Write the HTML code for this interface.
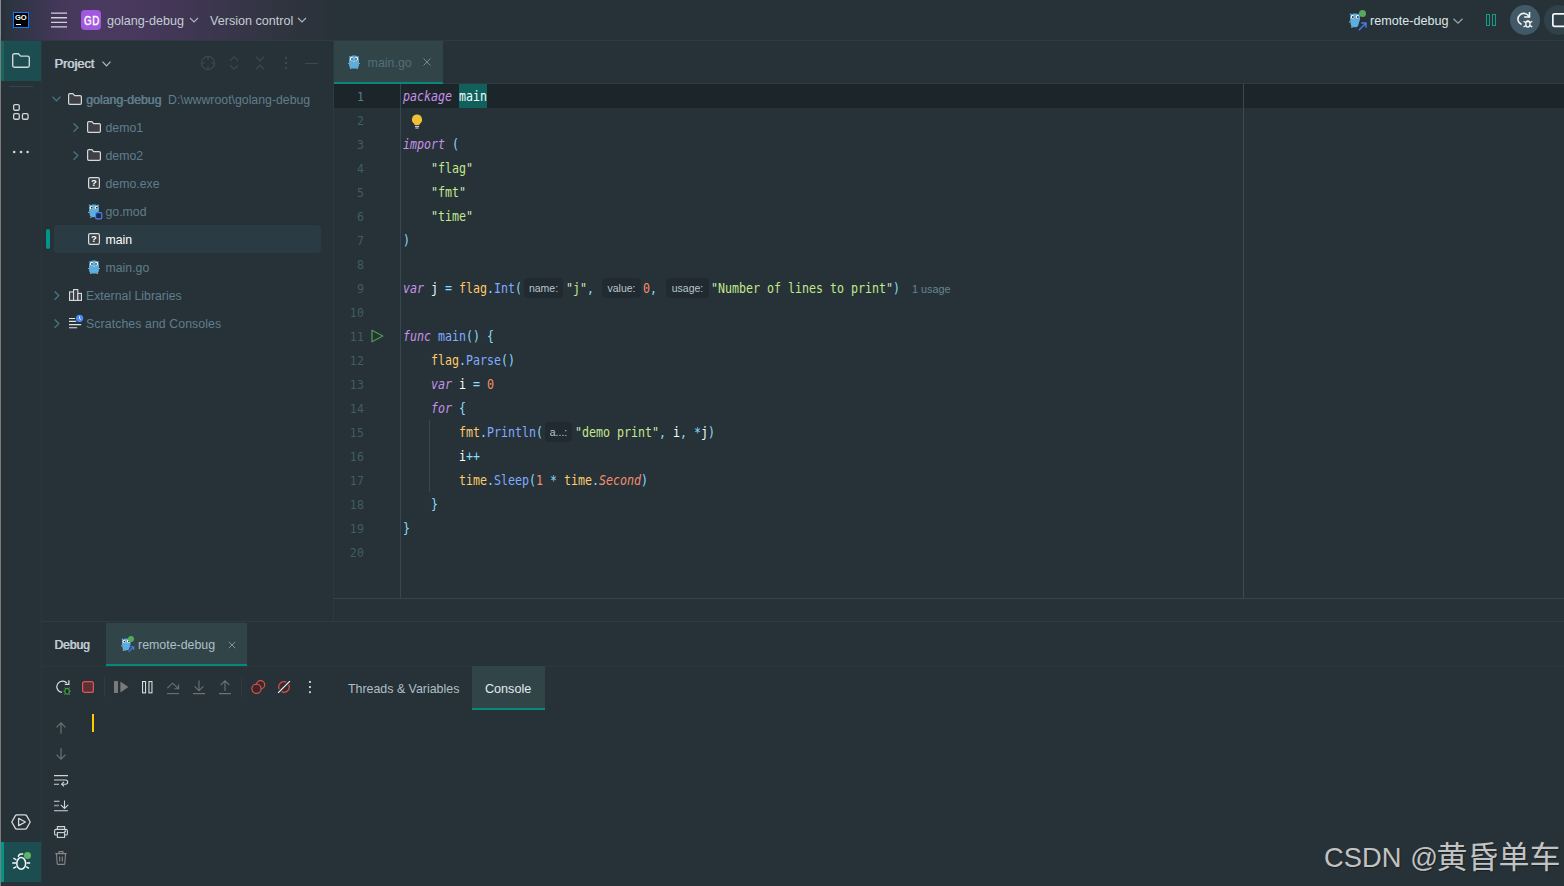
<!DOCTYPE html>
<html lang="en">
<head>
<meta charset="utf-8">
<title>golang-debug – main.go</title>
<style>
html,body{margin:0;padding:0;}
body{width:1564px;height:886px;overflow:hidden;background:#263238;position:relative;
  font-family:"Liberation Sans","Noto Sans CJK SC",sans-serif;font-size:12.4px;color:#b0bec5;}
.abs{position:absolute;}
.t{position:absolute;white-space:pre;line-height:16px;height:16px;}
svg{position:absolute;overflow:visible;}
/* title bar */
#titlebar{left:0;top:0;width:1564px;height:40px;
  background:linear-gradient(90deg,#27313a 0,#2c3440 10px,#34354b 28px,#44385a 60px,#4b3a60 100px,#46385b 150px,#3c364f 210px,#30343f 280px,#283239 340px,#263238 400px);}
#titleline{left:0;top:40px;width:1564px;height:1px;background:#2c3a43;}
#leftedge{left:0;top:0;width:1px;height:886px;background:linear-gradient(#8a8a8a 0,#8a8a8a 34px,#807b7b 42px,#807b7b 100%);}
/* stripe */
.stripeActive{background:#1c4d50;}
.stripeBar{background:#17665f;}
.vline{width:1px;background:#2a373e;}
.hline{height:1px;background:#2a373e;}
/* tree */
.tree{color:#607d8b;font-size:12.3px;}
.fb{text-shadow:0.55px 0 0 currentColor;}
.fb2{text-shadow:0.7px 0 0 currentColor;}
/* code */
.ln{position:absolute;width:40px;text-align:right;left:324.5px;letter-spacing:0.5px;font:11.5px "DejaVu Sans Mono","Liberation Mono",monospace;
  color:#435c66;line-height:24px;height:24px;white-space:pre;}
.cl{position:absolute;left:403px;margin-top:-0.7px;font:14px "DejaVu Sans Mono","Liberation Mono",monospace;white-space:pre;
  transform:scaleX(0.8305);transform-origin:0 50%;line-height:24px;height:24px;color:#eeffff;}
.k{color:#c792ea;font-style:italic;}
.s{color:#c3e88d;}
.q{color:#d4e6c0;}
.p{color:#89ddff;}
.y{color:#ffcb6b;}
.f{color:#82aaff;}
.n{color:#f78c6c;}
.ni{color:#f78c6c;font-style:italic;}
.hint{position:absolute;height:20px;border-radius:4px;background:#202a30;color:#b8c6ce;font-size:10.5px;line-height:20px;text-align:center;white-space:pre;}
</style>
</head>
<body>
<!-- ===== title bar ===== -->
<div class="abs" id="titlebar"></div>
<div class="abs" id="titleline"></div>

<!-- ===== left stripe ===== -->
<div class="abs stripeActive" style="left:1px;top:41px;width:40px;height:40px;"></div>
<div class="abs stripeBar" style="left:1px;top:41px;width:3px;height:40px;"></div>
<div class="abs hline" style="left:9px;top:86px;width:24px;background:#33444c;"></div>
<div class="abs stripeActive" style="left:1px;top:842px;width:40px;height:40px;"></div>
<div class="abs" style="left:1px;top:842px;width:3px;height:40px;background:#009688;"></div>
<div class="abs vline" style="left:41px;top:41px;height:845px;"></div>

<!-- ===== project panel ===== -->
<div class="abs vline" style="left:333px;top:41px;height:580px;background:#2b3942;"></div>
<div class="abs" style="left:54px;top:225px;width:267px;height:28px;border-radius:4px;background:#2b3b43;"></div>
<div class="abs" style="left:46px;top:229px;width:4px;height:20px;border-radius:2px;background:#009688;"></div>

<!-- ===== editor ===== -->
<div class="abs" style="left:334px;top:41px;width:109px;height:43px;background:#314549;"></div>
<div class="abs" style="left:334px;top:82px;width:109px;height:2px;background:#08897c;"></div>
<div class="abs hline" style="left:443px;top:83px;width:1121px;background:#2d3b42;"></div>
<div class="abs" style="left:334px;top:84px;width:1230px;height:24px;background:#1c252a;"></div>
<div class="abs" style="left:459px;top:84px;width:28px;height:24px;background:#12605c;"></div>
<div class="abs vline" style="left:400px;top:84px;height:514px;background:#37474f;"></div>
<div class="abs vline" style="left:1243px;top:84px;height:514px;background:#394a53;"></div>
<div class="abs vline" style="left:429px;top:420px;height:72px;background:#37474f;"></div>
<div class="abs hline" style="left:334px;top:598px;width:1230px;background:#344650;"></div>

<!-- ===== debug panel ===== -->
<div class="abs hline" style="left:42px;top:621px;width:1522px;background:#2d3b43;"></div>
<div class="abs" style="left:106px;top:623px;width:141px;height:43px;background:#314549;"></div>
<div class="abs" style="left:106px;top:664px;width:141px;height:2px;background:#08897c;"></div>
<div class="abs hline" style="left:42px;top:666px;width:1522px;background:#2a373e;"></div>
<div class="abs" style="left:472px;top:666px;width:73px;height:44px;background:#314549;"></div>
<div class="abs" style="left:472px;top:708px;width:73px;height:2px;background:#08897c;"></div>
<div class="abs vline" style="left:104px;top:677px;height:20px;background:#2c3b45;"></div>
<div class="abs vline" style="left:241px;top:677px;height:20px;background:#2c3b45;"></div>
<div class="abs" style="left:92px;top:714px;width:2px;height:18px;background:#ffcc00;"></div>

<div class="abs" id="leftedge"></div>

<!-- ===== TEXT ===== -->
<div class="t" style="left:107px;top:13px;font-size:12.6px;color:#c3cdd3;">golang-debug</div>
<div class="t" style="left:210px;top:13px;font-size:12.6px;color:#c3cdd3;">Version control</div>
<div class="t" style="left:1370px;top:13px;font-size:12.6px;color:#dfe6ea;">remote-debug</div>

<div class="t fb2" style="left:54.3px;top:56px;font-size:12.8px;color:#c3cdd3;">Project</div>

<div class="t tree fb" style="left:86px;top:92px;">golang-debug</div>
<div class="t tree" style="left:168px;top:92px;">D:\wwwroot\golang-debug</div>
<div class="t tree" style="left:105.5px;top:120px;">demo1</div>
<div class="t tree" style="left:105.5px;top:148px;">demo2</div>
<div class="t tree" style="left:105.5px;top:176px;">demo.exe</div>
<div class="t tree" style="left:105.5px;top:204px;">go.mod</div>
<div class="t tree" style="left:105.5px;top:232px;color:#ffffff;">main</div>
<div class="t tree" style="left:105.5px;top:260px;">main.go</div>
<div class="t tree" style="left:86px;top:288px;">External Libraries</div>
<div class="t tree" style="left:86px;top:316px;letter-spacing:0.09px;">Scratches and Consoles</div>

<div class="t" style="left:367.6px;top:55px;color:#546e7a;">main.go</div>

<div class="t fb2" style="left:54.2px;top:637px;color:#c3cdd3;font-size:12px;">Debug</div>
<div class="t" style="left:138px;top:637px;color:#b0bec5;">remote-debug</div>
<div class="t" style="left:348px;top:681px;color:#b0bec5;">Threads &amp; Variables</div>
<div class="t" style="left:485px;top:681px;color:#e4eaed;font-size:12.6px;">Console</div>

<div class="t" style="left:1324px;top:837.5px;font-size:27.3px;word-spacing:1.2px;line-height:40px;height:40px;color:#c2c2c2;text-shadow:1px 1px 1px rgba(0,0,0,.35);">CSDN @</div>
<div class="t" style="left:1436.5px;top:835.3px;font-size:31px;line-height:40px;height:40px;color:#c2c2c2;text-shadow:1px 1px 1px rgba(0,0,0,.35);font-family:'Noto Sans CJK SC','Liberation Sans',sans-serif;">黄昏单车</div>

<!-- ===== line numbers ===== -->
<div class="ln" style="top:85px;color:#5a7f8a;">1</div>
<div class="ln" style="top:109px;">2</div>
<div class="ln" style="top:133px;">3</div>
<div class="ln" style="top:157px;">4</div>
<div class="ln" style="top:181px;">5</div>
<div class="ln" style="top:205px;">6</div>
<div class="ln" style="top:229px;">7</div>
<div class="ln" style="top:253px;">8</div>
<div class="ln" style="top:277px;">9</div>
<div class="ln" style="top:301px;">10</div>
<div class="ln" style="top:325px;">11</div>
<div class="ln" style="top:349px;">12</div>
<div class="ln" style="top:373px;">13</div>
<div class="ln" style="top:397px;">14</div>
<div class="ln" style="top:421px;">15</div>
<div class="ln" style="top:445px;">16</div>
<div class="ln" style="top:469px;">17</div>
<div class="ln" style="top:493px;">18</div>
<div class="ln" style="top:517px;">19</div>
<div class="ln" style="top:541px;">20</div>
<!-- ===== code ===== -->
<div class="cl" style="top:85px;"><span class="k">package</span> main</div>
<div class="cl" style="top:133px;"><span class="k">import</span> <span class="p">(</span></div>
<div class="cl" style="top:157px;">    <span class="q">"</span><span class="s">flag</span><span class="q">"</span></div>
<div class="cl" style="top:181px;">    <span class="q">"</span><span class="s">fmt</span><span class="q">"</span></div>
<div class="cl" style="top:205px;">    <span class="q">"</span><span class="s">time</span><span class="q">"</span></div>
<div class="cl" style="top:229px;"><span class="p">)</span></div>
<div class="cl" style="top:277px;"><span class="k">var</span> j <span class="p">=</span> <span class="y">flag</span><span class="p">.</span><span class="f">Int</span><span class="p">(</span></div>
<div class="cl" style="top:277px;left:566px;"><span class="q">"</span><span class="s">j</span><span class="q">"</span><span class="p">,</span></div>
<div class="cl" style="top:277px;left:643px;"><span class="n">0</span><span class="p">,</span></div>
<div class="cl" style="top:277px;left:711px;"><span class="q">"</span><span class="s">Number of lines to print</span><span class="q">"</span><span class="p">)</span></div>
<div class="cl" style="top:325px;"><span class="k">func</span> <span class="f">main</span><span class="p">()</span> <span class="p">{</span></div>
<div class="cl" style="top:349px;">    <span class="y">flag</span><span class="p">.</span><span class="f">Parse</span><span class="p">()</span></div>
<div class="cl" style="top:373px;">    <span class="k">var</span> i <span class="p">=</span> <span class="n">0</span></div>
<div class="cl" style="top:397px;">    <span class="k">for</span> <span class="p">{</span></div>
<div class="cl" style="top:421px;">        <span class="y">fmt</span><span class="p">.</span><span class="f">Println</span><span class="p">(</span></div>
<div class="cl" style="top:421px;left:575px;"><span class="q">"</span><span class="s">demo print</span><span class="q">"</span><span class="p">,</span> i<span class="p">,</span> <span class="p">*</span>j<span class="p">)</span></div>
<div class="cl" style="top:445px;">        i<span class="p">++</span></div>
<div class="cl" style="top:469px;">        <span class="y">time</span><span class="p">.</span><span class="f">Sleep</span><span class="p">(</span><span class="n">1</span> <span class="p">*</span> <span class="y">time</span><span class="p">.</span><span class="ni">Second</span><span class="p">)</span></div>
<div class="cl" style="top:493px;">    <span class="p">}</span></div>
<div class="cl" style="top:517px;"><span class="p">}</span></div>

<div class="hint" style="left:524px;top:278px;width:39px;">name:</div>
<div class="hint" style="left:602px;top:278px;width:39px;">value:</div>
<div class="hint" style="left:666px;top:278px;width:43px;">usage:</div>
<div class="hint" style="left:545px;top:422px;width:27px;">a...:</div>
<div class="t" style="left:912px;top:281px;font-size:10.8px;color:#668592;">1 usage</div>

<!-- ===== ICONS ===== -->
<!-- GO logo -->
<div class="abs" style="left:13px;top:12px;width:16px;height:16px;background:#000;box-shadow:inset 0 0 0 1px #087cfa;"></div>
<div class="t" style="left:15px;top:12.5px;font:bold 7.6px 'Liberation Sans',sans-serif;line-height:9px;height:9px;color:#fff;letter-spacing:-0.2px;">GO</div>
<div class="abs" style="left:16px;top:24px;width:5px;height:1px;background:#fff;"></div>
<!-- hamburger -->
<svg style="left:51px;top:12px;" width="16" height="16" viewBox="0 0 16 16"><path d="M0 1.2H16M0 5.75H16M0 10.3H16M0 14.9H16" stroke="#cfd0d6" stroke-width="1.3" fill="none"/></svg>
<!-- GD badge -->
<div class="abs" style="left:81px;top:10px;width:20px;height:20px;border-radius:4px;background:#a259e0;"></div>
<div class="t" style="left:83.6px;top:12.5px;width:20px;font:13.2px 'Liberation Sans',sans-serif;line-height:16px;color:#fff;transform:scaleX(0.74);transform-origin:0 50%;letter-spacing:0.9px;-webkit-text-stroke:0.45px #fff;">GD</div>
<!-- chevrons title -->
<svg style="left:189px;top:17px;" width="10" height="6" viewBox="0 0 10 6"><path d="M1 1L5 5L9 1" stroke="#a9b3ba" stroke-width="1.2" fill="none"/></svg>
<svg style="left:297px;top:17px;" width="10" height="6" viewBox="0 0 10 6"><path d="M1 1L5 5L9 1" stroke="#a9b3ba" stroke-width="1.2" fill="none"/></svg>
<svg style="left:1453px;top:18px;" width="10" height="6" viewBox="0 0 10 6"><path d="M0.5 0.8L5 5.2L9.5 0.8" stroke="#9aa5ab" stroke-width="1.2" fill="none"/></svg>
<!-- title right: pause, circle buttons -->
<svg style="left:1486px;top:14px;" width="10" height="12" viewBox="0 0 10 12"><rect x="0.5" y="0.5" width="3" height="11" stroke="#0e9e8a" fill="none"/><rect x="6.5" y="0.5" width="3" height="11" stroke="#0e9e8a" fill="none"/></svg>
<div class="abs" style="left:1510px;top:4.8px;width:30.2px;height:30.2px;border-radius:50%;background:#425a67;"></div>
<svg style="left:1515px;top:10px;" width="20" height="20" viewBox="0 0 20 20" fill="none" stroke="#f4f7f8" stroke-width="1.6"><path d="M14.2 7.2A5.8 5.8 0 1 0 6.6 14.6"/><path d="M14.5 2V7H9.1"/><ellipse cx="12.9" cy="14.1" rx="2.1" ry="3.1" stroke-width="1.3"/><ellipse cx="12.9" cy="11.4" rx="1.3" ry="1" fill="#f4f7f8" stroke="none"/><path d="M10.9 12.6L8.5 11.3M14.9 12.6L17.3 11.3M10.9 15.6L8.5 17M14.9 15.6L17.3 17" stroke-width="1.3"/></svg>
<div class="abs" style="left:1544px;top:4.8px;width:30.2px;height:30.2px;border-radius:50%;background:#304149;"></div>
<svg style="left:1552px;top:12.9px;" width="16" height="15" viewBox="0 0 16 15"><rect x="0.85" y="0.85" width="15" height="12.5" rx="1.8" stroke="#f4f7f8" stroke-width="1.7" fill="none"/></svg>

<!-- stripe icons -->
<svg style="left:12px;top:53px;" width="18" height="15" viewBox="0 0 18 15"><path d="M0.7 2.4A1.7 1.7 0 0 1 2.4 0.7H6.4L8.6 3.1H15.6A1.7 1.7 0 0 1 17.3 4.8V12.6A1.7 1.7 0 0 1 15.6 14.3H2.4A1.7 1.7 0 0 1 0.7 12.6Z" stroke="#d0d6d9" stroke-width="1.4" fill="none"/></svg>
<svg style="left:13px;top:104px;" width="16" height="16" viewBox="0 0 16 16" fill="none" stroke="#d0d6d9" stroke-width="1.3"><rect x="0.65" y="0.65" width="5.6" height="5.6" rx="1.3"/><rect x="0.65" y="9.65" width="5.6" height="5.6" rx="1.3"/><rect x="9.45" y="9.65" width="5.6" height="5.6" rx="1.3"/></svg>
<svg style="left:12px;top:150px;" width="18" height="4" viewBox="0 0 18 4" fill="#d0d6d9"><circle cx="2.2" cy="2" r="1.3"/><circle cx="9" cy="2" r="1.3"/><circle cx="15.6" cy="2" r="1.3"/></svg>
<svg style="left:11px;top:814px;" width="20" height="16" viewBox="0 0 20 16" fill="none" stroke="#d5dadd" stroke-width="1.3" stroke-linejoin="round"><path d="M0.8 8L4.4 1.6A1.6 1.6 0 0 1 5.8 0.8H14.2A1.6 1.6 0 0 1 15.6 1.6L19.2 8L15.6 14.4A1.6 1.6 0 0 1 14.2 15.2H5.8A1.6 1.6 0 0 1 4.4 14.4Z"/><path d="M7.6 4.4L14.4 8L7.6 11.6Z"/></svg>
<svg style="left:11px;top:852px;" width="22" height="20" viewBox="0 0 22 20" fill="none" stroke="#f4f7f8" stroke-width="1.5" stroke-linecap="round"><ellipse cx="10.2" cy="11.4" rx="4.4" ry="5.9"/><path d="M7.4 4.5A2.9 2.9 0 0 1 10.1 2H11.7"/><path d="M2.3 6L5.3 7.8M1.2 11H5M2.3 16.3L5.4 14.6M18 16.3L15.1 14.6M19.2 11H15.5" stroke-width="1.4" stroke-linecap="butt"/></svg>
<div class="abs" style="left:24px;top:851.8px;width:7.2px;height:7.2px;border-radius:50%;background:#62b463;"></div>

<!-- project header icons -->
<svg style="left:200px;top:55px;" width="16" height="16" viewBox="0 0 16 16" fill="none" stroke="#384a52" stroke-width="1.2"><circle cx="8" cy="8" r="6.6"/><path d="M8 1.4V5M8 11V14.6M1.4 8H5M11 8H14.6"/></svg>
<svg style="left:229px;top:56px;" width="10" height="14" viewBox="0 0 10 14" fill="none" stroke="#384a52" stroke-width="1.2"><path d="M1 4.8L5 0.9L9 4.8M1 9.2L5 13.1L9 9.2"/></svg>
<svg style="left:255px;top:56px;" width="10" height="14" viewBox="0 0 10 14" fill="none" stroke="#384a52" stroke-width="1.2"><path d="M1 0.9L5 4.8L9 0.9M1 13.1L5 9.2L9 13.1"/></svg>
<svg style="left:285px;top:57px;" width="2" height="12" viewBox="0 0 2 12" fill="#384a52"><rect x="0" y="0" width="2" height="2"/><rect x="0" y="5" width="2" height="2"/><rect x="0" y="10" width="2" height="2"/></svg>
<div class="abs" style="left:305px;top:62.5px;width:13px;height:1.2px;background:#384a52;"></div>
<svg style="left:101.5px;top:61px;" width="9" height="6" viewBox="0 0 9 6"><path d="M0.5 0.7L4.5 4.8L8.5 0.7" stroke="#b5bcc2" stroke-width="1.2" fill="none"/></svg>
<!-- svg defs (shapes only) -->
<svg width="0" height="0" style="left:0;top:0;"><defs>
<g id="gopher"><circle cx="2" cy="1.9" r="0.85" fill="#5aafe0"/><circle cx="10" cy="1.9" r="0.85" fill="#5aafe0"/><ellipse cx="0.7" cy="8.5" rx="0.85" ry="0.6" fill="#c9a27a"/><ellipse cx="11.3" cy="8.5" rx="0.85" ry="0.6" fill="#c9a27a"/><ellipse cx="2.7" cy="13.5" rx="0.95" ry="0.55" fill="#c9a27a"/><ellipse cx="9.3" cy="13.5" rx="0.95" ry="0.55" fill="#c9a27a"/><path d="M1 6C1 2.2 3 0.6 6 0.6C9 0.6 11 2.2 11 6L10.9 10.4C10.8 12.8 9 13.5 6 13.5C3 13.5 1.2 12.8 1.1 10.4Z" fill="#5aafe0"/><circle cx="3.6" cy="3.7" r="1.7" fill="#fff"/><circle cx="8.4" cy="3.7" r="1.7" fill="#fff"/><circle cx="4.0" cy="3.9" r="0.85" fill="#1b2328"/><circle cx="8.0" cy="3.9" r="0.85" fill="#1b2328"/><ellipse cx="6" cy="5.7" rx="0.95" ry="0.55" fill="#c9a27a"/><rect x="5.6" y="6.1" width="0.8" height="0.8" fill="#fff"/></g>
<g id="gopherside"><circle cx="1.6" cy="1.4" r="0.9" fill="#5aafe0"/><circle cx="9.3" cy="1.4" r="0.9" fill="#5aafe0"/><ellipse cx="0.6" cy="8.3" rx="0.8" ry="0.6" fill="#c9a27a"/><ellipse cx="2.6" cy="13.2" rx="0.9" ry="0.55" fill="#c9a27a"/><path d="M0.9 5.6C0.9 2 2.8 0.5 5.5 0.5C8.2 0.5 10.2 2 10.2 5.2C10.2 7.4 9.2 8.6 8.8 10.6C8.5 12.6 7.2 13.2 5 13.2C2.8 13.2 1.6 12.4 1.5 10.2C1.4 8.4 0.9 7.4 0.9 5.6Z" fill="#5aafe0"/><circle cx="3.1" cy="3.5" r="1.6" fill="#fff"/><circle cx="7.9" cy="3.5" r="1.6" fill="#fff"/><circle cx="3.5" cy="3.7" r="0.85" fill="#1b2328"/><circle cx="8.2" cy="3.7" r="0.85" fill="#1b2328"/><ellipse cx="5.6" cy="5.5" rx="0.9" ry="0.5" fill="#c9a27a"/></g>
<g id="folder"><path d="M0.6 1.9A1.3 1.3 0 0 1 1.9 0.6H4.9L6.6 2.6H12.1A1.3 1.3 0 0 1 13.4 3.9V10.1A1.3 1.3 0 0 1 12.1 11.4H1.9A1.3 1.3 0 0 1 0.6 10.1Z" stroke="#d5d9dc" stroke-width="1.2" fill="#3e4046"/></g>
<g id="chevR"><path d="M0.6 0.5L4.8 4.6L0.6 8.7" stroke="#4f7585" stroke-width="1.3" fill="none"/></g>
<g id="unk"><rect x="0.6" y="0.6" width="10.8" height="10.8" rx="1.6" stroke="#d8dde0" stroke-width="1.2" fill="#3c4147"/></g>
</defs></svg>

<!-- tree icons -->
<svg style="left:51.6px;top:96.3px;" width="9" height="6" viewBox="0 0 9 6"><path d="M0.5 0.6L4.5 4.9L8.5 0.6" stroke="#4f7585" stroke-width="1.3" fill="none"/></svg>
<svg style="left:68px;top:93px;" width="14" height="12"><use href="#folder"/></svg>
<svg style="left:72.5px;top:122.5px;" width="6" height="10"><use href="#chevR"/></svg>
<svg style="left:87px;top:121px;" width="14" height="12"><use href="#folder"/></svg>
<svg style="left:72.5px;top:150.5px;" width="6" height="10"><use href="#chevR"/></svg>
<svg style="left:87px;top:149px;" width="14" height="12"><use href="#folder"/></svg>
<svg style="left:88px;top:177px;" width="12" height="12"><use href="#unk"/></svg>
<div class="t" style="left:88px;top:177px;width:12px;height:12px;line-height:12.4px;text-align:center;font:bold 9.5px/12.4px 'Liberation Sans',sans-serif;color:#fff;">?</div>
<svg style="left:88px;top:233px;" width="12" height="12"><use href="#unk"/></svg>
<div class="t" style="left:88px;top:233px;width:12px;height:12px;line-height:12.4px;text-align:center;font:bold 9.5px/12.4px 'Liberation Sans',sans-serif;color:#fff;">?</div>
<svg style="left:88.2px;top:204.3px;" width="13" height="14"><use href="#gopherside" transform="scale(1.08,1)"/></svg>
<svg style="left:94.8px;top:211.7px;" width="8" height="8" viewBox="0 0 8 8"><rect x="0.6" y="0.6" width="6.2" height="6.2" rx="1.4" stroke="#4d82f5" stroke-width="1.2" fill="#1d2a48"/></svg>
<svg style="left:88.1px;top:260.2px;" width="12" height="14"><use href="#gopher"/></svg>
<svg style="left:53.5px;top:290.5px;" width="6" height="10"><use href="#chevR"/></svg>
<svg style="left:53.5px;top:318.5px;" width="6" height="10"><use href="#chevR"/></svg>
<svg style="left:69px;top:289px;" width="13" height="12" viewBox="0 0 13 12" stroke="#d8dde0" stroke-width="1.1" fill="#3e4046"><rect x="0.55" y="2.9" width="4" height="8.5"/><rect x="4.55" y="0.6" width="4.3" height="10.8"/><rect x="8.85" y="4.4" width="3.6" height="7"/></svg>
<svg style="left:69px;top:314px;" width="16" height="15" viewBox="0 0 16 15"><path d="M0 4.5H6.2M0 7.4H7.2M0 10.6H12.2M0 13.7H8.2" stroke="#dfe3e6" stroke-width="1.1" fill="none"/><circle cx="10.6" cy="4.3" r="3.6" fill="#4a8cf7"/><path d="M10.5 2.3V4.6L11.8 5.6" stroke="#fff" stroke-width="0.9" fill="none"/></svg>

<!-- editor tab -->
<svg style="left:348.2px;top:55.2px;" width="12" height="14"><use href="#gopher"/></svg>
<svg style="left:423px;top:57.8px;" width="8" height="8" viewBox="0 0 8 8"><path d="M0.5 0.5L7.5 7.5M7.5 0.5L0.5 7.5" stroke="#7b8790" stroke-width="1" fill="none"/></svg>
<!-- bulb -->
<svg style="left:411px;top:114px;" width="12" height="15" viewBox="0 0 12 15"><path d="M6 0.6A5 5 0 0 1 8.6 9.9L8.4 11H3.6L3.4 9.9A5 5 0 0 1 6 0.6Z" fill="#f2c037"/><path d="M3.9 12.4H8.1M4.4 14H7.6" stroke="#d9dde0" stroke-width="1" fill="none"/></svg>
<!-- run gutter -->
<svg style="left:371px;top:329px;" width="13" height="14" viewBox="0 0 13 14"><path d="M1 1.3L11.8 7L1 12.7Z" stroke="#4c9a4f" stroke-width="1.3" fill="none" stroke-linejoin="round"/></svg>

<!-- title run config gopher -->
<svg style="left:1349.3px;top:12.6px;" width="12" height="14" viewBox="0 0 11 13"><use href="#gopherside"/></svg>
<div class="abs" style="left:1358.7px;top:9.8px;width:7.6px;height:7.6px;border-radius:50%;background:#55a95a;"></div>
<svg style="left:1358px;top:21.5px;" width="9" height="9" viewBox="0 0 9 9"><path d="M0.8 8.2L7.6 1.4M3.2 1H8V5.8" stroke="#4a7ae8" stroke-width="1.4" fill="none"/></svg>
<!-- debug tab gopher -->
<svg style="left:121px;top:637.5px;" width="10.5" height="12.3" viewBox="0 0 11 13"><use href="#gopherside"/></svg>
<div class="abs" style="left:128.1px;top:635.8px;width:6px;height:6px;border-radius:50%;background:#55a95a;"></div>
<svg style="left:127.8px;top:645.6px;" width="6.4" height="6.4" viewBox="0 0 9 9"><path d="M0.8 8.2L7.6 1.4M3.2 1H8V5.8" stroke="#4a7ae8" stroke-width="1.6" fill="none"/></svg>
<svg style="left:228px;top:641px;" width="8" height="8" viewBox="0 0 8 8"><path d="M0.8 0.8L7.2 7.2M7.2 0.8L0.8 7.2" stroke="#7d929c" stroke-width="1" fill="none"/></svg>
<!-- debug toolbar -->
<svg style="left:54.5px;top:678px;" width="18" height="18" viewBox="0 0 18 18" fill="none"><path d="M6.9 14.4A5.7 5.7 0 1 1 12 5.2" stroke="#d8dde0" stroke-width="1.2"/><path d="M13.9 2.3V6.4H9.8" stroke="#d8dde0" stroke-width="1.2"/><ellipse cx="12.1" cy="13.3" rx="2.2" ry="2.9" stroke="#43a047" stroke-width="1.1" fill="#1f2b22"/><path d="M10.5 10.6L9.4 9.6M13.7 10.6L14.8 9.6M9.9 13.3H8.4M14.3 13.3H15.8M10.4 15.6L9.2 16.7M13.8 15.6L15 16.7" stroke="#43a047" stroke-width="0.9"/></svg>
<svg style="left:82px;top:681px;" width="12" height="12" viewBox="0 0 12 12"><rect x="0.6" y="0.6" width="10.8" height="10.8" rx="2" stroke="#e05555" stroke-width="1.2" fill="#5c3035"/></svg>
<svg style="left:114px;top:681px;" width="15" height="12" viewBox="0 0 15 12" fill="#7a7a7a"><rect x="0" y="0" width="4" height="12" rx="0.6"/><path d="M6.4 0.5L14.4 6L6.4 11.5Z"/></svg>
<svg style="left:141.5px;top:680.8px;" width="11" height="12.4" viewBox="0 0 11 12.4" fill="none" stroke="#d5dadd" stroke-width="1.1"><rect x="0.55" y="0.55" width="3" height="11.3"/><rect x="6.95" y="0.55" width="3" height="11.3"/></svg>
<svg style="left:167px;top:681px;" width="12" height="14" viewBox="0 0 12 14" fill="none" stroke="#6e7275" stroke-width="1.1"><path d="M0.4 7.2L5.6 2.2L11.4 7.6"/><path d="M7.4 7.8H11.6V3.6"/><path d="M0 12.6H12"/></svg>
<svg style="left:193px;top:680px;" width="12" height="15" viewBox="0 0 12 15" fill="none" stroke="#6e7275" stroke-width="1.1"><path d="M6 0.5V10.6M1.6 6.4L6 10.8L10.4 6.4M0 13.6H12"/></svg>
<svg style="left:219px;top:680px;" width="12" height="15" viewBox="0 0 12 15" fill="none" stroke="#6e7275" stroke-width="1.1"><path d="M6 11V0.9M1.6 5.2L6 0.8L10.4 5.2M0 13.6H12"/></svg>
<svg style="left:250px;top:679px;" width="16" height="16" viewBox="0 0 16 16"><circle cx="10.6" cy="5.75" r="4.1" stroke="#d4524e" stroke-width="1.2" fill="#3f2628"/><circle cx="6.5" cy="9.8" r="4.6" stroke="#d4524e" stroke-width="1.2" fill="#3f2628"/></svg>
<svg style="left:277px;top:680px;" width="14" height="14" viewBox="0 0 14 14"><circle cx="7" cy="7" r="5.3" stroke="#d9534f" stroke-width="1.2" fill="#3f2628"/><path d="M0.6 13.4L13.4 0.6" stroke="#263238" stroke-width="3.4"/><path d="M1.1 12.9L12.9 1.1" stroke="#e8ecee" stroke-width="1.3"/></svg>
<svg style="left:309px;top:681px;" width="2" height="12" viewBox="0 0 2 12" fill="#d0d3d6"><rect x="0" y="0" width="1.9" height="1.9"/><rect x="0" y="5.1" width="1.9" height="1.9"/><rect x="0" y="10.2" width="1.9" height="1.9"/></svg>
<!-- console side icons -->
<svg style="left:56px;top:722px;" width="10" height="12" viewBox="0 0 10 12" fill="none" stroke="#6c7073" stroke-width="1.2"><path d="M5 11.7V1M0.5 5.3L5 0.8L9.5 5.3"/></svg>
<svg style="left:56px;top:748px;" width="10" height="12" viewBox="0 0 10 12" fill="none" stroke="#6c7073" stroke-width="1.2"><path d="M5 0.3V11M0.5 6.7L5 11.2L9.5 6.7"/></svg>
<svg style="left:54px;top:775px;" width="15" height="12" viewBox="0 0 15 12" fill="none" stroke="#d0d4d7" stroke-width="1.1"><path d="M0 0.6H14M0 5H11.6A2.1 2.1 0 0 1 11.6 9.2H8M0 9.2H5"/><path d="M10 7L7.6 9.2L10 11.4"/></svg>
<svg style="left:54px;top:800px;" width="15" height="12" viewBox="0 0 15 12" fill="none" stroke="#d0d4d7" stroke-width="1.1"><path d="M0 1.2H5.6M0 10.8H14M10.5 0.4V8.2M6.8 4.8L10.5 8.4L14.2 4.8"/><path d="M0 5.5H5" stroke="#8a9196" stroke-width="1.6"/></svg>
<svg style="left:54px;top:826px;" width="14" height="12" viewBox="0 0 14 12" fill="none" stroke="#d0d4d7" stroke-width="1.1"><path d="M3.4 3.4V0.6H10.6V3.4"/><path d="M3.2 9H1.9A1.3 1.3 0 0 1 0.6 7.7V4.7A1.3 1.3 0 0 1 1.9 3.4H12.1A1.3 1.3 0 0 1 13.4 4.7V7.7A1.3 1.3 0 0 1 12.1 9H10.8"/><rect x="3.4" y="6.6" width="7.2" height="4.8"/><circle cx="11.2" cy="5.3" r="0.4" fill="#d0d4d7"/></svg>
<svg style="left:55px;top:851px;" width="12" height="14" viewBox="0 0 12 14" fill="none" stroke="#8b8786" stroke-width="1.1"><path d="M0.3 2.6H11.7M3.9 2.4V1.2A0.6 0.6 0 0 1 4.5 0.6H7.5A0.6 0.6 0 0 1 8.1 1.2V2.4M1.5 2.8L2.2 12.4A1 1 0 0 0 3.2 13.4H8.8A1 1 0 0 0 9.8 12.4L10.5 2.8M4.7 5.4V10.6M7.3 5.4V10.6"/></svg>
</body>
</html>
